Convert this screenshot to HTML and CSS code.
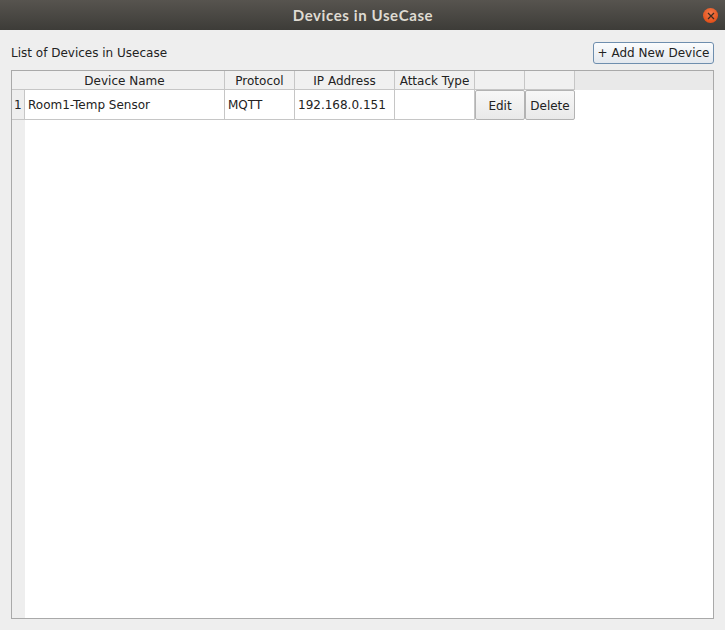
FILE: index.html
```html
<!DOCTYPE html>
<html>
<head>
<meta charset="utf-8">
<link rel="stylesheet" href="styles.css">
</head>
<body>
<div class="window">
  <div class="titlebar">
    <span class="title">Devices in UseCase</span>
    <span class="close"><svg width="8" height="8" viewBox="0 0 8 8"><path d="M1 1L7 7M7 1L1 7" stroke="#3a2a20" stroke-width="1.2"/></svg></span>
  </div>
  <div class="content">
    <div class="toolbar">
      <span class="label">List of Devices in Usecase</span>
      <button class="add">+ Add New Device</button>
    </div>
    <div class="tablebox">
      <div class="grid">
        <div class="hcorner"></div>
        <div class="hcell">Device Name</div>
        <div class="hcell">Protocol</div>
        <div class="hcell">IP Address</div>
        <div class="hcell">Attack Type</div>
        <div class="hcell"></div>
        <div class="hcell"></div>
        <div class="hrest"></div>

        <div class="rnum">1</div>
        <div class="cell">Room1-Temp Sensor</div>
        <div class="cell">MQTT</div>
        <div class="cell">192.168.0.151</div>
        <div class="cell"></div>
        <div class="bcell"><button class="tbtn">Edit</button></div>
        <div class="bcell"><button class="tbtn">Delete</button></div>
        <div class="rest"></div>

        <div class="rfill"></div>
        <div class="fill"></div>
      </div>
    </div>
  </div>
</div>
</body>
</html>
```

FILE: styles.css
```css
* { box-sizing: border-box; }
html, body { margin: 0; padding: 0; }
body {
  width: 725px;
  height: 630px;
  background: #eeeeee;
  font-family: "DejaVu Sans", sans-serif;
  font-size: 12px;
  color: #222222;
  overflow: hidden;
}
.window { display: flex; flex-direction: column; height: 630px; }
.titlebar {
  height: 30px;
  flex: none;
  background: linear-gradient(#57544f, #3d3c38);
  position: relative;
  display: flex;
  align-items: center;
  justify-content: center;
}
.title {
  font-family: "Lato", "DejaVu Sans", sans-serif;
  font-weight: bold;
  font-size: 15px;
  letter-spacing: 0.6px;
  color: #dfdbd2;
  padding-left: 1px;
}
.close {
  position: absolute;
  left: 703px;
  top: 8px;
  width: 15px;
  height: 15px;
  border-radius: 50%;
  background: radial-gradient(circle at 50% 35%, #f27a4c, #e4531c 70%, #c8461a);
  display: flex;
  align-items: center;
  justify-content: center;
}
.content {
  flex: 1;
  display: flex;
  flex-direction: column;
  padding: 12px 11px 11px 11px;
}
.toolbar {
  display: flex;
  align-items: center;
  justify-content: space-between;
  height: 22px;
  margin-bottom: 6px;
}
.add {
  font-family: "DejaVu Sans", sans-serif;
  font-size: 12px;
  color: #222;
  height: 22px;
  width: 121px;
  padding: 0;
  border: 1px solid #6e8eae;
  border-radius: 3px;
  background: linear-gradient(#fbfcfd, #e3e8ee);
}
.tablebox {
  flex: 1;
  width: 703px;
  border: 1px solid #a9a9a9;
  background: #ffffff;
  display: flex;
}
.grid {
  flex: 1;
  display: grid;
  grid-template-columns: 13px 200px 70px 100px 80px 50px 50px 1fr;
  grid-template-rows: 19px 30px 1fr;
}
.hcorner {
  background: #f0f0f0;
  border-bottom: 1px solid #c6c6c6;
}
.hcell {
  background: #f0f0f0;
  border-right: 1px solid #c6c6c6;
  border-bottom: 1px solid #c6c6c6;
  text-align: center;
  padding-top: 1px;
  line-height: 18px;
  white-space: nowrap;
}
.hrest { background: #e9e9e9; }
.rnum {
  background: #eeeeee;
  border-right: 1px solid #c6c6c6;
  border-bottom: 1px solid #c6c6c6;
  padding-left: 2px;
  padding-top: 1px;
  line-height: 29px;
}
.cell {
  border-right: 1px solid #c6c6c6;
  border-bottom: 1px solid #c6c6c6;
  padding-left: 3px;
  padding-top: 1px;
  line-height: 28px;
  white-space: nowrap;
}
.bcell { display: flex; }
.tbtn {
  flex: 1;
  font-family: "DejaVu Sans", sans-serif;
  font-size: 12px;
  color: #222;
  padding: 2px 0 0 0;
  border: 1px solid #b3b3b3;
  border-radius: 2px;
  background: linear-gradient(#f7f7f7, #e9e9e9);
}
.rest { background: #ffffff; }
.rfill { background: #eeeeee; grid-column: 1; }
.fill { grid-column: 2 / -1; background: #ffffff; }
```
